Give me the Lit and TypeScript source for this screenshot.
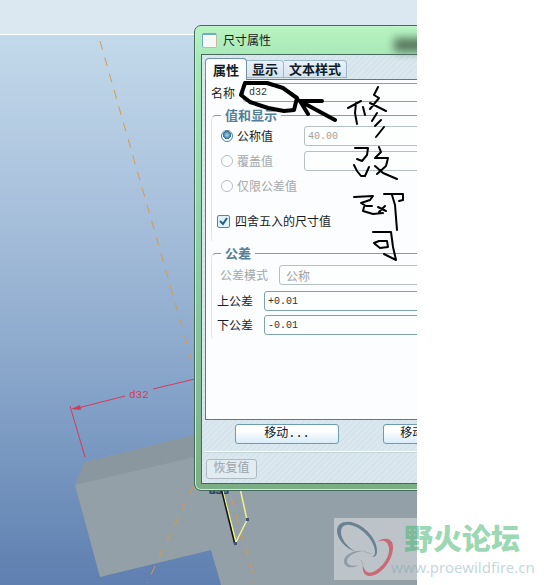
import { LitElement, html, css } from "lit";
import { customElement } from "lit/decorators.js";

@customElement("model-scene")
class ModelScene extends LitElement {
  static styles = css`
    :host { display: block; }
    svg { display: block; }
    .dim { font: 11px "Liberation Mono", monospace; fill: #d23c58; }
    .dark { font: 11px "Liberation Mono", monospace; fill: #20304c; }
  `;
  render() {
    return html`<svg width="417" height="585" viewBox="0 0 417 585" fill="none" aria-hidden="true">
      <path fill="#93a0a8" d="M75 485 85 462 194 435 417 380V585H221L211 550 100 577Z" />
      <path fill="#8b979f" d="M75 485 85 462 194 435V457Z" />
      <path stroke="#d99a48" stroke-dasharray="9 8" d="M100 41 255 581" />
      <path stroke="#d99a48" stroke-dasharray="9 9" d="M194 485 147 583" />
      <path stroke="#d23c58" d="M74 409 125 396M153 389 199 378M70 406 85 457" />
      <path fill="#d23c58" d="M71 409 80 405 81 410Z" />
      <text class="dim" x="129" y="398">d32</text>
      <path fill="#5f7893" d="M209 488h20v6h-20z" />
      <text class="dark" x="209" y="494">d38</text>
      <path stroke="#eef08a" stroke-width="1.5" d="M222 488 236 542 247 520 240 488" />
      <path stroke="#111" stroke-width="1.5" d="M221 488 235 545" />
      <path fill="#44546a" d="M246 518h3v3h-3zM234 542h3v3h-3z" />
    </svg>`;
  }
}

@customElement("pen-notes")
class PenNotes extends LitElement {
  static styles = css`
    :host { display: block; }
    svg { display: block; }
  `;
  render() {
    return html`<svg width="417" height="300" viewBox="0 0 417 300" fill="none" stroke="#000"
      stroke-linejoin="round" stroke-linecap="round" role="img" aria-label="修改即可">
      <path stroke-width="4" d="M245 83 241 95 250 102 268 108 284 111 294 110 297 98 283 88 267 83ZM335 120 298 100M322 101H300L308 114" />
      <g stroke-width="2">
        <path d="M348 108 361 101M356 103 355 113 357 124M363 107 365 115M378 87 374 95 379 98 370 109M370 103 386 111M377 113 372 121M381 120 375 126M384 127 376 137" />
        <path d="M355 148H368L367 155 362 161 357 159M354 165 357 171 361 176H365L369 167M379 147 381 152 375 158H388L386 166 377 174M375 166 383 173 397 179" />
        <path d="M354 197 373 196 370 200 361 203 366 206 372 206M364 207 363 211 373 214 383 213M378 207 386 211M385 206 379 212M384 194H403V200L399 201M392 195 395 205 397 230" />
        <path d="M373 232H391L393 247 396 260 384 254M374 243 379 241H387L388 247 380 248 375 244" />
      </g>
    </svg>`;
  }
}

@customElement("forum-mark")
class ForumMark extends LitElement {
  static styles = css`
    :host { display: flex; height: 62px; align-items: center; }
    svg { display: block; flex: none; }
    .words { display: flex; flex-direction: column; margin-left: -3px; }
    .name {
      font: 900 29px/36px "Noto Sans CJK SC", sans-serif;
      color: rgba(60, 178, 105, 0.52);
      padding-left: 13px;
      white-space: nowrap;
    }
    .url { font: 15px/24px "Noto Sans", sans-serif; color: rgba(120, 165, 175, 0.45); text-decoration: none; }
  `;
  render() {
    return html`
      <svg width="60" height="62" viewBox="0 0 60 62" aria-hidden="true">
        <path fill="#6b8090" fill-rule="evenodd" d="M22 34C11 30 3 21 3 13 3 6 9 3 17 4 31 7 44 22 43 34 43 38 40 40 37 38 40 39 41 37 41 34 41 23 28 9 16 7 10 6 7 9 7 14 7 21 13 29 22 34Z" />
        <path fill="#c96a76" d="M43 24C49 19 59 19 59 29 59 43 46 58 36 58 30 58 28 53 29 47 30 53 34 56 39 54 48 50 56 39 55 30 54 23 49 21 43 24Z" />
        <path fill="#8e9ca6" d="M29 33C20 32 10 37 10 43 10 50 18 51 25 47 18 49 13 47 13 43 13 38 21 34 29 33Z" />
        <path stroke="#a3afb6" fill="none" d="M29 33 37 36M29 47 27 42" />
      </svg>
      <div class="words">
        <span class="name">野火论坛</span>
        <a class="url" href="#">www.proewildfire.cn</a>
      </div>`;
  }
}

@customElement("dimension-dialog")
class DimensionDialog extends LitElement {
  static styles = css`
    :host {
      display: flex;
      flex-direction: column;
      box-sizing: border-box;
      padding: 0 6px 6px;
      border: 1px solid #426b5c;
      border-radius: 7px;
      box-shadow: inset 0 0 0 1px #c4f1cf;
      background: linear-gradient(#b8f4c2, #a9e8b7 30px, #8dcda4 50%, #7cae85);
      font: 12px/16px "Noto Sans CJK SC", sans-serif;
      color: #1c1c1c;
    }
    * { box-sizing: border-box; }
    .title { display: flex; align-items: center; gap: 6px; height: 28px; margin: 0; padding-left: 1px; font: inherit; position: relative; }
    .icon { width: 15px; height: 15px; border: 1px solid #c6b9a7; border-top: 2px solid #6fa8cc; border-left-color: #6fa8cc; border-radius: 2px; background: #f6f8f6; }
    .smudge { position: absolute; left: 193px; top: 12px; width: 60px; height: 14px; background: #5a7a61; filter: blur(4px); }
    .body {
      display: flex; flex-direction: column; flex: 1;
      border: 1px solid #48685f;
      padding: 3px;
      background: repeating-linear-gradient(135deg, #dce8ef 0 2px, #d5e3eb 2px 4px);
    }
    .tabs { display: flex; align-items: flex-end; height: 22px; margin-bottom: -1px; position: relative; }
    .tab { font: bold 13px/16px "Noto Sans CJK SC", sans-serif; height: 18px; padding: 0 5px; color: #101c28; border: 1px solid #9fb8c8; border-left: 0; border-radius: 0 4px 0 0; background: linear-gradient(#eaf2f8, #d5e3ee); margin: 0 0 2px; white-space: nowrap; }
    .tab.on { height: 22px; padding: 0 7px; border: 1px solid #6f93a5; border-bottom: 0; border-radius: 4px 4px 0 0; background: #fbfdfe; margin: 0; }
    .panel { height: 341px; border: 1px solid #567d8c; background: #fbfdfe; padding: 3px 5px; }
    .row { display: flex; align-items: center; height: 20px; margin-bottom: 4px; }
    .field { flex: 1; min-width: 0; height: 20px; border: 1px solid #7da2b0; border-radius: 3px; background: #fdfefe; padding: 0 3px; font: 10px "Liberation Mono", "Noto Sans CJK SC", monospace; color: #333; }
    .field:disabled { border-color: #b6c0c4; color: #a0a0a0; opacity: 1; }
    select.field { appearance: none; font: 12px "Noto Sans CJK SC", sans-serif; padding: 0 6px; }
    .name { height: 19px; margin: 0; gap: 8px; }
    .name .field { height: 19px; padding: 0 5px; }
    fieldset { border: 1px solid #9db4c0; border-color: #7f9ead #9db4c0 transparent #dfe6ea; border-radius: 5px; margin: 0; padding: 0; min-width: 0; }
    legend { font: bold 13px/20px "Noto Sans CJK SC", sans-serif; color: #557f98; margin-left: 9px; padding: 0 4px; }
    .values { height: 138px; margin-top: 3px; padding: 1px 0 0 9px; }
    .values legend { margin-left: 0; }
    .values .row { gap: 4px; margin-bottom: 5px; }
    .values .row label { width: 63px; white-space: nowrap; }
    .values .row .field { margin: 0; }
    .values .round { gap: 5px; margin-top: 15px; }
    .values .round label { width: auto; }
    .off { color: #a4a8aa; }
    input[type="radio"] { appearance: none; flex: none; width: 12px; height: 12px; margin: 0; border: 1px solid #b4bec4; border-radius: 50%; background: #fff; }
    input[type="radio"]:checked { border-color: #4b7f9e; background: radial-gradient(circle at 50% 40%, #8ec7e2 0 1px, #2c6a94 4px, #fff 4px); }
    .tick { position: relative; display: flex; flex: none; margin-left: -4px; }
    .tick input { appearance: none; width: 13px; height: 13px; margin: 0; border: 1px solid #4f87a4; border-radius: 2px; background: #e1f2fa; }
    .tick svg { position: absolute; left: 0; top: 0; pointer-events: none; }
    .tol { padding: 2px 4px 0 5px; }
    .tol legend { margin-left: 4px; }
    .tol .row { gap: 11px; }
    .tol .mode { padding-left: 3px; margin-bottom: 6px; }
    .buttons { display: flex; justify-content: space-between; padding: 4px 30px 7px; border-bottom: 1px solid #fff; box-shadow: 0 1px 0 #c4d3dc; }
    button.push { font: 12px/16px "Liberation Mono", "Noto Sans CJK SC", monospace; width: 104px; height: 20px; padding: 0; color: #111; border: 1px solid #6d9db5; border-radius: 3px; background: linear-gradient(#fff 30%, #d9ecf8); }
    .foot { padding: 7px 1px 0; }
    button.push.reset { width: 51px; color: #9aa5ab; border-color: #acbac2; background: #e2ebf0; display: block; }
  `;
  render() {
    return html`
      <h1 class="title"><span class="icon"></span>尺寸属性<span class="smudge"></span></h1>
      <div class="body">
        <div class="tabs" role="tablist">
          <button class="tab on" role="tab" aria-selected="true">属性</button>
          <button class="tab" role="tab">显示</button>
          <button class="tab" role="tab">文本样式</button>
        </div>
        <div class="panel">
          <div class="row name"><label for="nm">名称</label><input class="field" id="nm" value="d32" /></div>
          <fieldset class="values">
            <legend>值和显示</legend>
            <div class="row">
              <input type="radio" name="kind" id="k1" checked /><label for="k1">公称值</label>
              <input class="field" aria-label="公称值" value="40.00" disabled />
            </div>
            <div class="row off">
              <input type="radio" name="kind" id="k2" disabled /><label for="k2">覆盖值</label>
              <input class="field" aria-label="覆盖值" disabled />
            </div>
            <div class="row off">
              <input type="radio" name="kind" id="k3" disabled /><label for="k3">仅限公差值</label>
            </div>
            <div class="row round">
              <span class="tick"><input type="checkbox" id="rd" checked />
                <svg width="13" height="13" viewBox="0 0 13 13" fill="none" stroke="#23607f" stroke-width="2"><path d="M3 6 6 9 10 3" /></svg></span>
              <label for="rd">四舍五入的尺寸值</label>
            </div>
          </fieldset>
          <fieldset class="tol">
            <legend>公差</legend>
            <div class="row mode off"><label for="md">公差模式</label>
              <select class="field" id="md" disabled><option>公称</option></select></div>
            <div class="row"><label for="up">上公差</label><input class="field" id="up" value="+0.01" /></div>
            <div class="row"><label for="lo">下公差</label><input class="field" id="lo" value="-0.01" /></div>
          </fieldset>
        </div>
        <div class="buttons">
          <button class="push">移动...</button>
          <button class="push">移动文本...</button>
        </div>
        <div class="foot"><button class="push reset" disabled>恢复值</button></div>
      </div>`;
  }
}

@customElement("app-root")
class AppRoot extends LitElement {
  static styles = css`
    :host { display: grid; grid-template-columns: minmax(0, 1fr) 128px; min-height: 100vh; position: relative; overflow: hidden; background: #fff; }
    .work { position: relative; overflow: hidden; display: flex; flex-direction: column; background: #dbe8f1; }
    .view { flex: 1; border-top: 1px solid #fff; background: linear-gradient(#c3daeb, #a9c1dc 30%, #86a4c9 64%, #5e7fb0); }
    .strip { height: 34px; }
    model-scene, pen-notes { position: absolute; left: 0; top: 0; }
    pen-notes { pointer-events: none; }
    dimension-dialog { position: absolute; left: 194px; top: 25px; width: 334px; height: 466px; }
    .plate { position: absolute; right: 0; bottom: 5px; width: 83px; height: 62px; background: rgba(255, 255, 255, 0.38); }
    forum-mark { position: absolute; right: 9px; bottom: 5px; width: 202px; }
  `;
  render() {
    return html`
      <main class="work">
        <div class="strip"></div>
        <div class="view"></div>
        <model-scene></model-scene>
        <dimension-dialog></dimension-dialog>
        <pen-notes></pen-notes>
        <div class="plate"></div>
      </main>
      <forum-mark></forum-mark>`;
  }
}
